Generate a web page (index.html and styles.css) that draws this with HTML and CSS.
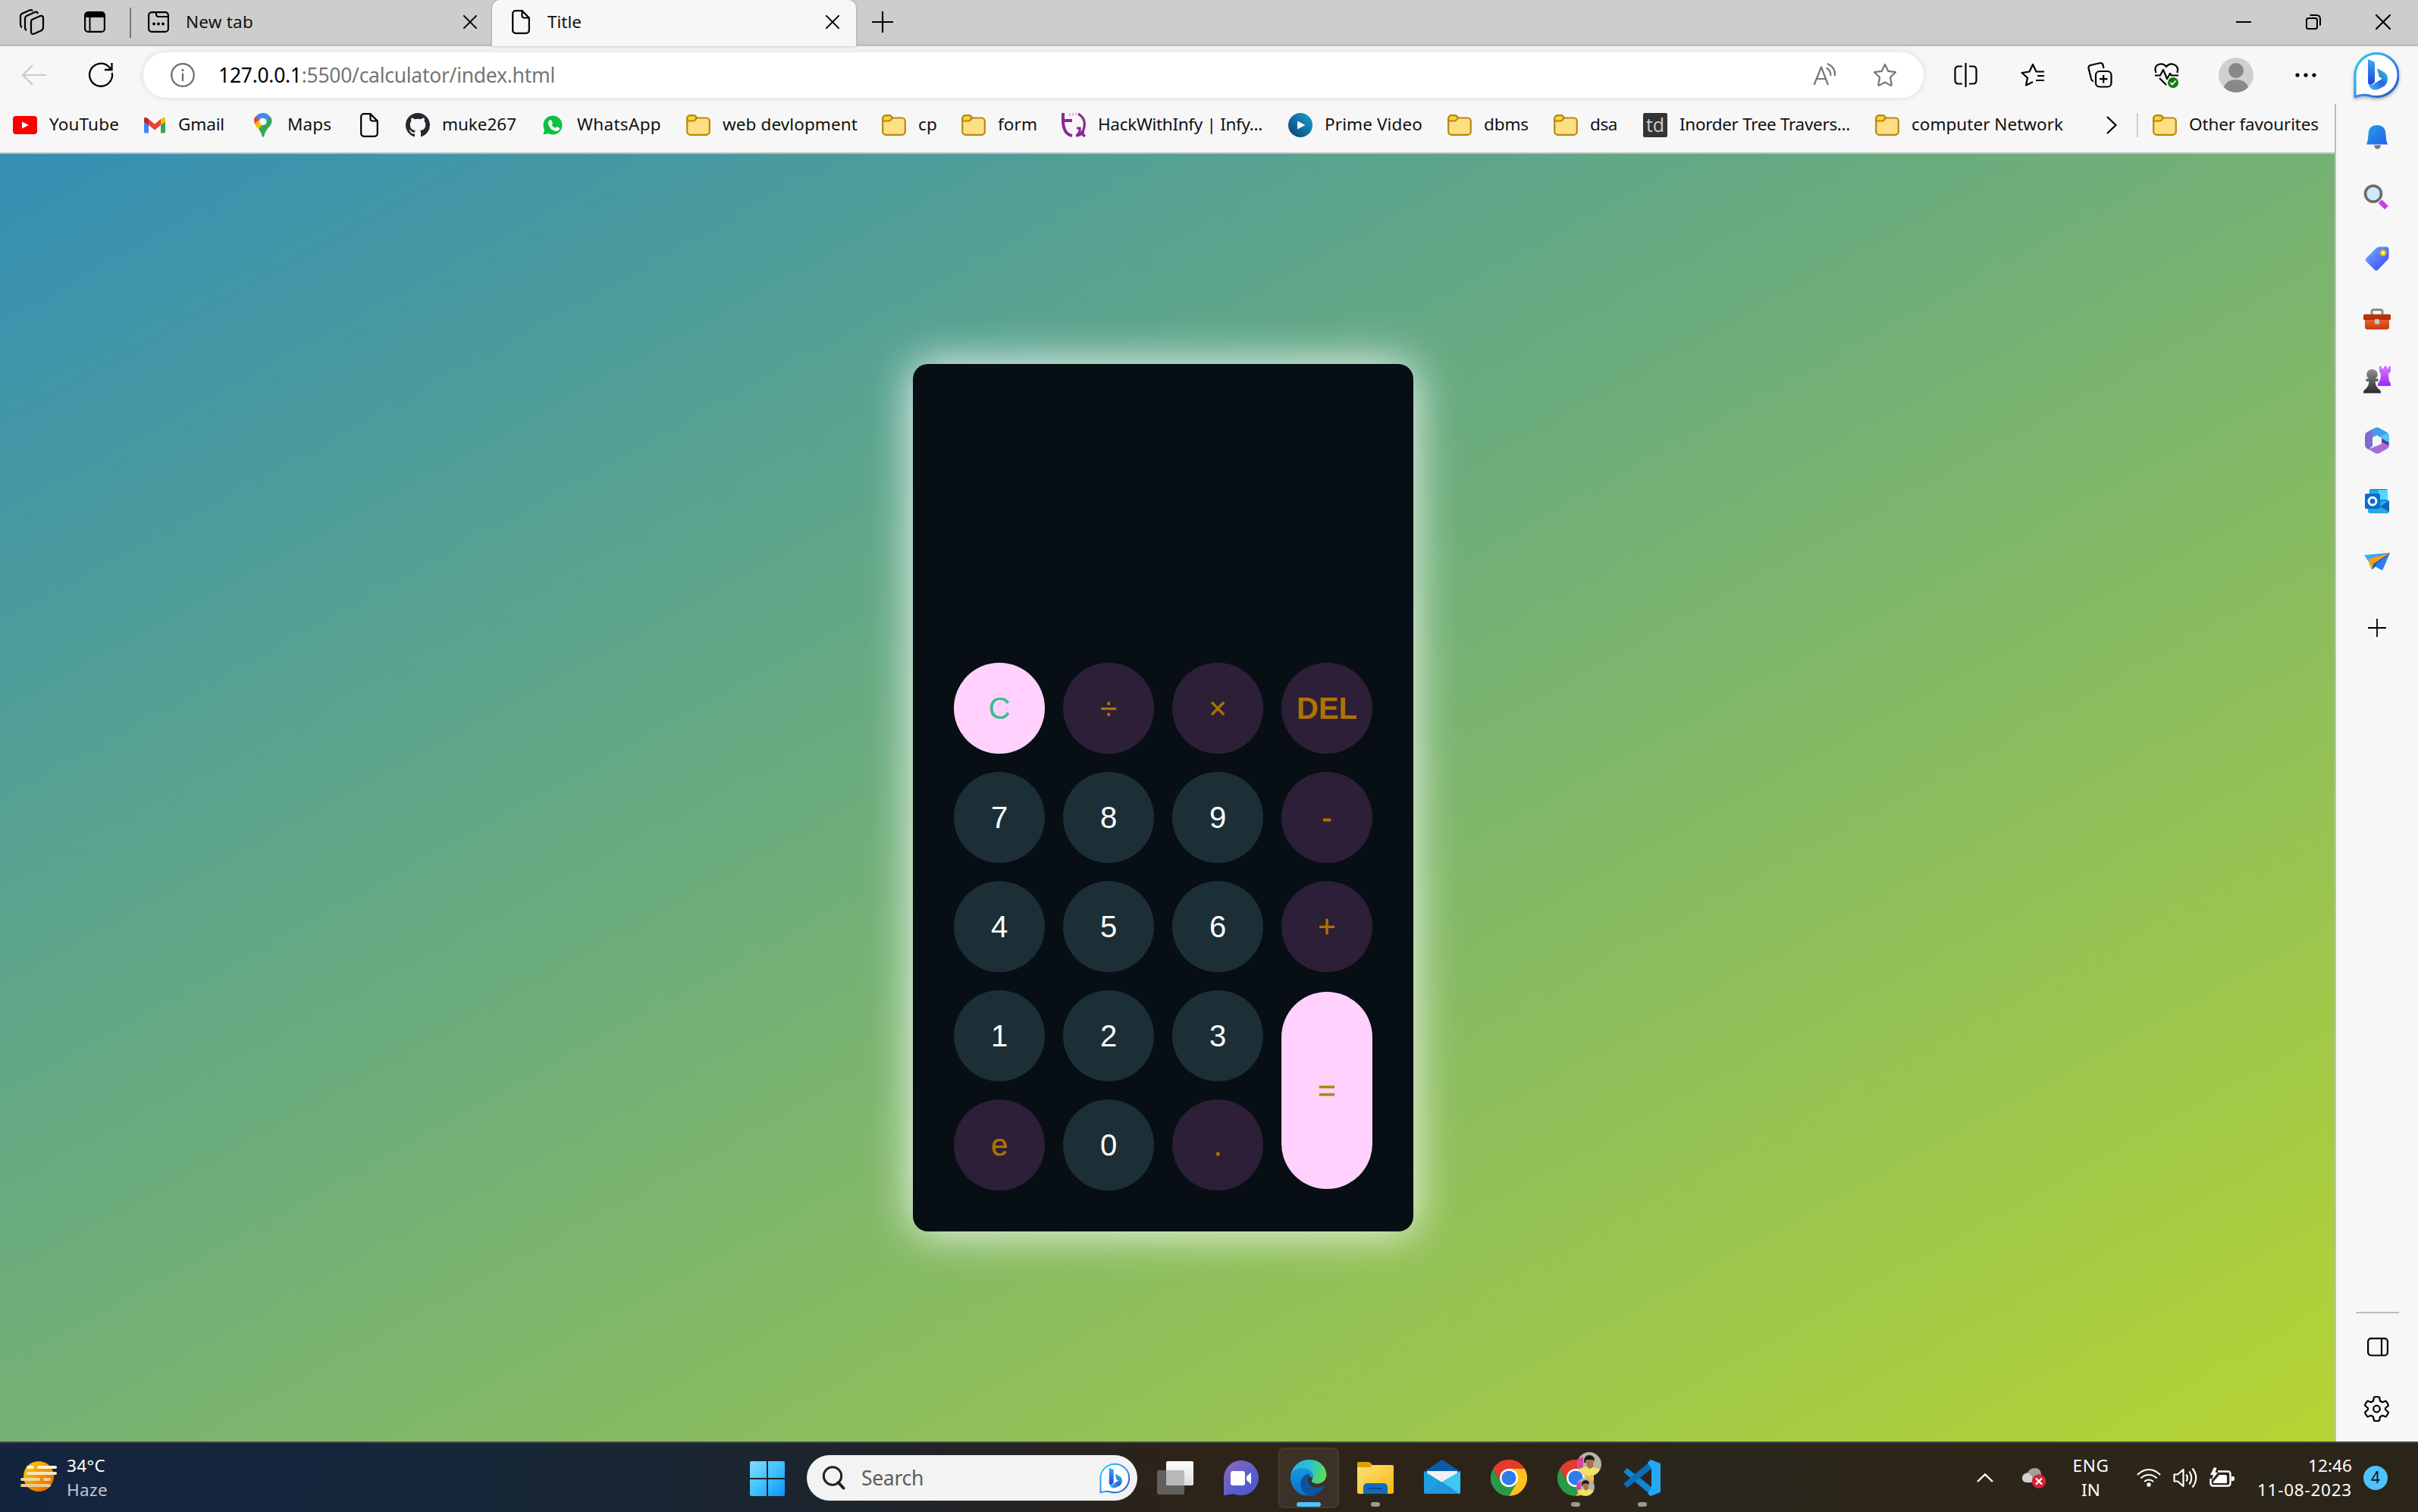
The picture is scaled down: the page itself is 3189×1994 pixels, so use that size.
FILE: index.html
```html
<!DOCTYPE html>
<html lang="en">
<head>
<meta charset="utf-8">
<title>Title</title>
<link rel="stylesheet" href="styles.css">
</head>
<body>
<svg class="defs" width="0" height="0">
  <defs>
    <linearGradient id="gBing" x1="0" y1="0" x2="1" y2="1"><stop offset="0" stop-color="#17d3ee"/><stop offset=".5" stop-color="#3a8ff0"/><stop offset="1" stop-color="#1d4fc4"/></linearGradient>
    <linearGradient id="gBingB" x1="0" y1="0" x2="0" y2="1"><stop offset="0" stop-color="#3aa9f5"/><stop offset="1" stop-color="#1c45dc"/></linearGradient>
    <linearGradient id="gBingC" x1="0" y1="1" x2="1" y2="0"><stop offset="0" stop-color="#37c3f8"/><stop offset=".5" stop-color="#2b62e0"/><stop offset="1" stop-color="#27e0c8"/></linearGradient>
    <linearGradient id="gBell" x1="0" y1="0" x2="1" y2="1"><stop offset="0" stop-color="#1fa3e0"/><stop offset="1" stop-color="#2a5df0"/></linearGradient>
    <linearGradient id="gTag" x1="0" y1="0" x2="1" y2="1"><stop offset="0" stop-color="#70b4ff"/><stop offset="1" stop-color="#3a3ff5"/></linearGradient>
    <linearGradient id="gBox" x1="0" y1="0" x2="0" y2="1"><stop offset="0" stop-color="#ef6a35"/><stop offset="1" stop-color="#c23a0c"/></linearGradient>
    <linearGradient id="gPawn" x1="0" y1="0" x2="0" y2="1"><stop offset="0" stop-color="#8e8e8e"/><stop offset="1" stop-color="#2a2a2a"/></linearGradient>
    <linearGradient id="gRook" x1="0" y1="0" x2="0" y2="1"><stop offset="0" stop-color="#d57bff"/><stop offset="1" stop-color="#a425f5"/></linearGradient>
    <linearGradient id="gPlane" x1="0" y1="0" x2="1" y2="1"><stop offset="0" stop-color="#3cc0f0"/><stop offset="1" stop-color="#2463e8"/></linearGradient>
    <linearGradient id="gWin" x1="0" y1="0" x2="1" y2="1"><stop offset="0" stop-color="#82dcff"/><stop offset=".5" stop-color="#41c1ff"/><stop offset="1" stop-color="#0a93ff"/></linearGradient>
    <linearGradient id="gSun" x1="0" y1="0" x2="1" y2="1"><stop offset="0" stop-color="#ffd400"/><stop offset="1" stop-color="#e55a00"/></linearGradient>
    <linearGradient id="gChat" x1="0" y1="0" x2="1" y2="1"><stop offset="0" stop-color="#8f6ab8"/><stop offset=".55" stop-color="#5b5fcb"/><stop offset="1" stop-color="#4c55c8"/></linearGradient>
    <linearGradient id="gEdgeT" x1="0" y1=".4" x2="1" y2=".6"><stop offset="0" stop-color="#2ba8e8"/><stop offset=".5" stop-color="#2bc3d2"/><stop offset="1" stop-color="#62e04a"/></linearGradient>
    <linearGradient id="gEdgeL" x1="0" y1="0" x2="0" y2="1"><stop offset="0" stop-color="#1796dc"/><stop offset="1" stop-color="#0a72cf"/></linearGradient>
    <linearGradient id="gFolder" x1="0" y1="0" x2="1" y2="1"><stop offset="0" stop-color="#ffe07a"/><stop offset="1" stop-color="#f8b80e"/></linearGradient>
    <linearGradient id="gPrime" x1="1" y1="0" x2="0" y2="1"><stop offset="0" stop-color="#1b9fd0"/><stop offset="1" stop-color="#0b3f78"/></linearGradient>
    <linearGradient id="gSq" x1="0" y1="0" x2="0" y2="1"><stop offset="0" stop-color="#ffffff"/><stop offset="1" stop-color="#dcdcdc"/></linearGradient>
    <symbol id="folder" viewBox="0 0 32 28"><path d="M1.2 23V5.5A4.3 4.3 0 0 1 5.5 1.200H9.500Q11.500 1.200 12.500 2.700L14 4.500H26.500A4.300 4.300 0 0 1 30.800 8.800V22.500A4.300 4.300 0 0 1 26.500 26.800H5.500A4.300 4.300 0 0 1 1.200 22.500Z" fill="#ffdf83" stroke="#b58a0a" stroke-width="2.200"/><path d="M1.200 8.500V5.500A4.300 4.300 0 0 1 5.500 1.200H9.500Q11.500 1.200 12.500 2.700L14 4.500 11.500 7.500Q10.500 8.500 9 8.500Z" fill="#fecf3f" stroke="#b58a0a" stroke-width="2.200"/></symbol>
    <symbol id="page" viewBox="0 0 24 32"><path d="M5 1.200H13.500L22.800 10.500V27A3.800 3.800 0 0 1 19 30.800H5A3.800 3.800 0 0 1 1.200 27V5A3.800 3.800 0 0 1 5 1.200ZM13.500 1.500V8A2.500 2.500 0 0 0 16 10.500H22.500" fill="none" stroke="#000" stroke-width="2.200"/></symbol>
    <symbol id="bing" viewBox="0 0 60 62"><path d="M2 59.500V31A28.500 28.500 0 1 1 30.500 59.500Q25 59.500 20 57.800 13 56 2 59.500Z" fill="#fff" stroke="url(#gBing)" stroke-width="3"/><path d="M19 10 27 13.500Q28 14 28 15.500V40Q24 45 20 43.500 19 42 19 40Z" fill="url(#gBingB)"/><path d="M31 22 40 27Q45 30 45 36 45 43 39 46.500L32 50Q24 52 21 46 20 43 20 42 25 46 28 42L38 35.500 34 33.500Z" fill="url(#gBingC)"/></symbol>
    <symbol id="chrome" viewBox="0 0 48 48"><path d="M24 24 3.200 12A24 24 0 0 1 44.800 12Z" fill="#e33b2e"/><path d="M24 24V12H44.800A24 24 0 0 1 24 48L34.400 30Z" fill="#fcc31e"/><path d="M24 24 34.400 30 24 48A24 24 0 0 1 3.200 12L13.600 30Z" fill="#2a9a47"/><path d="M24 12H44.800A24 24 0 0 0 3.200 12L13.600 30A12 12 0 0 1 24 12Z" fill="#e33b2e"/><circle cx="24" cy="24" r="12" fill="#fff"/><circle cx="24" cy="24" r="9.600" fill="#2f7cee"/></symbol>
    <symbol id="cross" viewBox="0 0 20 20"><path d="M1 1 19 19M19 1 1 19" stroke="#000" stroke-width="2.200" stroke-linecap="round" fill="none"/></symbol>
    <symbol id="star" viewBox="0 0 32 32"><path d="M16 2 20.300 10.800 30 12.200 23 19 24.700 28.700Q24.700 30 23.500 29.600L16 25.500 8.500 29.600Q7.300 30 7.300 28.700L9 19 2 12.200 11.700 10.800Z" fill="none" stroke="#767676" stroke-width="2.200" stroke-linejoin="round"/></symbol>
    <symbol id="face" viewBox="0 0 32 32"><circle cx="16" cy="16" r="16" fill="#b9b3a4"/><path d="M1.500 9A16 16 0 0 0 1.500 22L8 20V6Z" fill="#d6489c"/><path d="M2 23A16 16 0 0 0 30 23Q26 20 21 20L12 19Q6 21 2 23Z" fill="#efe36b"/><path d="M11 10Q16 5 22 10L21 19Q17 25 13 19Z" fill="#a9714f"/><path d="M9 13Q9 4 16 4T23 12L21 10H12L10.500 15Z" fill="#1c1816"/></symbol>
  </defs>
</svg>

<header class="tabs">
  <svg class="ic" width="34" height="34" viewBox="0 0 34 34" fill="none" stroke="#000" stroke-width="2.200" stroke-linejoin="round"><path d="M17 14 28 9Q32 8 32 12V24Q32 27 29 28.500L20 32.500Q16 34 16 30V17Q16 15 17 14ZM10 28Q8 27 8 24V12Q8 10 10 9L21 4Q24 3 25 6M4 24Q2 23 2 20V9Q2 7 4 6L14 1.500Q17 .500 18 2.500"/></svg>
  <svg class="ic" width="28" height="28" viewBox="0 0 28 28"><rect x="1.100" y="1.100" width="25.800" height="25.800" rx="4" fill="none" stroke="#000" stroke-width="2.200"/><path d="M1 8V5Q1 1 5 1H23Q27 1 27 5V8Z"/><path d="M7.500 8V27" stroke="#000" stroke-width="2"/></svg>
  <i class="tab-sep"></i>
  <div class="tab">
    <svg class="ic" width="28" height="28" viewBox="0 0 28 28"><rect x="1.100" y="1.100" width="25.800" height="25.800" rx="4" fill="none" stroke="#000" stroke-width="2.200"/><path d="M11 1V4Q11 7 14 7H27" fill="none" stroke="#000" stroke-width="2"/><circle cx="8" cy="16.500" r="1.900"/><circle cx="14" cy="16.500" r="1.900"/><circle cx="20" cy="16.500" r="1.900"/></svg>
    <span class="t" data-w="88">New tab</span>
    <svg class="ic" width="18" height="18"><use href="#cross"/></svg>
  </div>
  <div class="tab active">
    <svg class="ic" width="24" height="32"><use href="#page"/></svg>
    <span class="t" data-w="44">Title</span>
    <svg class="ic" width="18" height="18"><use href="#cross"/></svg>
  </div>
  <svg class="ic plus" width="28" height="28" viewBox="0 0 28 28"><path d="M14 0V28M0 14H28" stroke="#000" stroke-width="2.200"/></svg>
  <div class="win">
    <svg class="ic" width="20" height="20" viewBox="0 0 20 20"><path d="M0 10H20" stroke="#000" stroke-width="2"/></svg>
    <svg class="ic" width="20" height="20" viewBox="0 0 20 20" fill="none" stroke="#000" stroke-width="2"><rect x="1" y="5" width="14" height="14" rx="2.500"/><path d="M5.500 1H14Q19 1 19 6V14.500"/></svg>
    <svg class="ic" width="20" height="20"><use href="#cross"/></svg>
  </div>
</header>

<nav class="toolbar">
  <svg class="ic" width="32" height="28" viewBox="0 0 32 28"><path d="M14 1 1 14 14 27M1 14H32" fill="none" stroke="#c9c9c9" stroke-width="2.200"/></svg>
  <svg class="ic" width="32" height="32" viewBox="0 0 32 32"><path d="M30.800 13A15 15 0 1 1 26 4.500L30 9M30.500 0V9H21" fill="none" stroke="#000" stroke-width="2.300"/></svg>
  <div class="url">
    <svg class="ic" width="32" height="32" viewBox="0 0 32 32"><circle cx="16" cy="16" r="14.800" fill="none" stroke="#6a6a6a" stroke-width="2.200"/><path d="M16 13.500V24" stroke="#6a6a6a" stroke-width="2.200"/><circle cx="16" cy="9.500" r="1.600" fill="#6a6a6a"/></svg>
    <span class="t address" data-w="443"><b>127.0.0.1</b>:5500/calculator/index.html</span>
    <svg class="ic" width="32" height="32" viewBox="0 0 32 32" fill="none" stroke="#767676" stroke-width="2.200"><path d="M1.500 29 11 5.500 20 29M5 21H17M19 1Q30 6 29 17M17.500 6.500Q24 10 23.500 17" stroke-linejoin="round"/></svg>
    <svg class="ic" width="32" height="32"><use href="#star"/></svg>
  </div>
  <svg class="ic" width="32" height="32" viewBox="0 0 32 32" fill="none" stroke="#000" stroke-width="2.200"><path d="M15.500 0V32M11 4.500H6Q1.500 4.500 1.500 9V23Q1.500 27.500 6 27.500H11M20 4.500H25Q29.500 4.500 29.500 9V23Q29.500 27.500 25 27.500H20"/></svg>
  <svg class="ic" width="32" height="32" viewBox="0 0 32 32" fill="none" stroke="#000" stroke-width="2.200" stroke-linejoin="round"><path d="M31 11.500H20.500L16 2 11.500 11.500 1.500 13 9 19.500 7 29.500 16 25M22 17H31M20 23H31"/></svg>
  <svg class="ic" width="34" height="34" viewBox="0 0 34 34" fill="none" stroke="#000" stroke-width="2.200"><rect x="11" y="12" width="20.500" height="20.500" rx="5"/><path d="M21.200 17V27.500M16 22.200H26.500M8 25Q6 25 5 22L1.500 8Q1 5 4 4L17 1Q19.500 .800 20.500 3.500L21.500 8"/></svg>
  <svg class="ic" width="34" height="34" viewBox="0 0 34 34" fill="none" stroke="#000" stroke-width="2.200" stroke-linejoin="round"><path d="M2.500 14Q-1 4 8 2.500 13 2 16 6 20 1 26 3 33 6 30.500 14M1 17.500H8L12 10 17 22 21 15 23 17.500H32M7 21 16 30"/><circle cx="25" cy="27" r="7" fill="#0f7b0f" stroke="none"/><path d="M21.500 27 24 29.500 28.500 24.500" stroke="#fff" stroke-width="1.800"/></svg>
  <svg class="ic" width="46" height="46" viewBox="0 0 46 46"><circle cx="23" cy="23" r="23" fill="#d2d0ce"/><circle cx="23" cy="17" r="10" fill="#8a8886"/><path d="M7 39Q10 29 23 29T39 39Q32 46 23 46T7 39Z" fill="#8a8886"/></svg>
  <svg class="ic" width="28" height="6" viewBox="0 0 28 6"><circle cx="3" cy="3" r="2.600"/><circle cx="14" cy="3" r="2.600"/><circle cx="25" cy="3" r="2.600"/></svg>
  <svg class="ic bing-top" width="60" height="62"><use href="#bing"/></svg>
</nav>

<nav class="bookmarks">
  <a><svg width="32" height="24" viewBox="0 0 32 24"><rect width="32" height="24" rx="4" fill="#f00"/><path d="M12 7.500 21 12 12 16.500Z" fill="#fff"/></svg><span class="t" data-w="91">YouTube</span></a>
  <a><svg width="32" height="24" viewBox="0 0 32 24"><path d="M3 4V21Q3 22.500 4.500 22.500H9V10Z" fill="#4285f4"/><path d="M31 4V21Q31 22.500 29.500 22.500H25V10Z" fill="#34a853"/><path d="M9 4 17 10.500 25 4V12L17 18.500 9 12Z" fill="#ea4335"/><path d="M3 5Q3 1 6 2L9 4V12L3 7.500Z" fill="#c5221f"/><path d="M31 5Q31 1 28 2L25 4V12L31 7.500Z" fill="#fbbc04"/></svg><span class="t" data-w="60">Gmail</span></a>
  <a><svg width="32" height="32" viewBox="0 0 32 32"><path d="M6 5A12 12 0 0 1 20 .800L9 14Z" fill="#4285f4"/><path d="M6 4.500 11 9 5.500 15Q2 9 6 4.500Z" fill="#ea4335"/><path d="M5 14 20 1Q28 5 27.500 12L10 21Q6 18 5 14Z" fill="#fbbc04"/><path d="M10 21 26 5Q30 13 23 19.500 18 25 17 31.500H15Q14 26 10 21Z" fill="#34a853"/><path d="M13 1Q22-1 25.500 6L18 13Z" fill="#4285f4"/><circle cx="16" cy="11.500" r="4.600" fill="#fff"/></svg><span class="t" data-w="57">Maps</span></a>
  <a><svg class="pg" width="24" height="32"><use href="#page"/></svg></a>
  <a><svg width="32" height="32" viewBox="0 0 16 16"><path fill="#24292f" d="M8 0C3.580 0 0 3.580 0 8c0 3.540 2.290 6.530 5.470 7.590.4.070.55-.17.55-.38 0-.19-.01-.82-.01-1.490-2.010.37-2.530-.49-2.690-.94-.09-.23-.48-.94-.82-1.130-.28-.15-.68-.52-.01-.53.63-.01 1.080.58 1.230.82.72 1.210 1.870.87 2.330.66.07-.52.28-.87.51-1.070-1.780-.2-3.640-.89-3.640-3.950 0-.87.31-1.590.82-2.150-.08-.2-.36-1.020.08-2.120 0 0 .67-.21 2.200.82.64-.18 1.320-.27 2-.27s1.360.09 2 .27c1.530-1.040 2.200-.82 2.200-.82.44 1.100.16 1.920.08 2.120.51.56.82 1.270.82 2.150 0 3.070-1.870 3.750-3.650 3.950.29.25.54.73.54 1.480 0 1.070-.01 1.930-.01 2.200 0 .21.15.46.55.38A8.010 8.010 0 0 0 16 8c0-4.420-3.580-8-8-8z"/></svg><span class="t" data-w="97">muke267</span></a>
  <a><svg width="32" height="32" viewBox="0 0 32 32"><path d="M3.500 28.500 5 22A12.500 12.500 0 1 1 10 27Z" fill="#0dc143"/><path d="M11.500 9.500 14 9.200 16 13.500 14.500 15.500Q16 18.500 19.500 20L21.500 18 25 20Q25 23.500 21 24 11 22.500 10 13 10 11 11.500 9.500Z" fill="#fff"/></svg><span class="t" data-w="110">WhatsApp</span></a>
  <a><svg width="32" height="28"><use href="#folder"/></svg><span class="t" data-w="177">web devlopment</span></a>
  <a><svg width="32" height="28"><use href="#folder"/></svg><span class="t" data-w="24">cp</span></a>
  <a><svg width="32" height="28"><use href="#folder"/></svg><span class="t" data-w="51">form</span></a>
  <a><svg width="32" height="32" viewBox="0 0 32 32" fill="none" stroke="#8a2a95"><path d="M2 0V12Q3 28 14 30M2 10H14" stroke-width="4"/><path d="M22 1Q32 7 30 18 28 30 19 30M20 20H24V26H30M20 30 24 25 31 31" stroke-width="3.200"/><path d="M11 0V4M15 0V4M19 0V3" stroke="#d5a8da" stroke-width="1.500"/></svg><span class="t" data-w="216">HackWithInfy | Infy...</span></a>
  <a><svg width="32" height="32" viewBox="0 0 32 32"><circle cx="16" cy="16" r="16" fill="url(#gPrime)"/><path d="M12 10.500 22.500 16 12 21.500Z" fill="#fff"/></svg><span class="t" data-w="128">Prime Video</span></a>
  <a><svg width="32" height="28"><use href="#folder"/></svg><span class="t" data-w="58">dbms</span></a>
  <a><svg width="32" height="28"><use href="#folder"/></svg><span class="t" data-w="35">dsa</span></a>
  <a><i class="td">td</i><span class="t" data-w="224">Inorder Tree Travers...</span></a>
  <a><svg width="32" height="28"><use href="#folder"/></svg><span class="t" data-w="199">computer Network</span></a>
  <svg class="ic" width="14" height="24" viewBox="0 0 14 24"><path d="M1 1 12.500 12 1 23" fill="none" stroke="#000" stroke-width="2.200"/></svg>
  <i class="bm-sep"></i>
  <a><svg width="32" height="28"><use href="#folder"/></svg><span class="t" data-w="170">Other favourites</span></a>
</nav>

<main class="page">
  <section class="calculator">
    <div class="display"></div>
    <div class="keys">
      <button class="key clear">C</button><button class="key op">÷</button><button class="key op">×</button><button class="key op del">DEL</button>
      <button class="key">7</button><button class="key">8</button><button class="key">9</button><button class="key op">-</button>
      <button class="key">4</button><button class="key">5</button><button class="key">6</button><button class="key op">+</button>
      <button class="key">1</button><button class="key">2</button><button class="key">3</button><button class="key equals">=</button>
      <button class="key op">e</button><button class="key">0</button><button class="key op">.</button>
    </div>
  </section>
</main>

<aside class="side">
  <div><svg width="32" height="38" viewBox="0 0 32 38"><path d="M12 28.500H21Q20 33.500 16.500 33.500T12 28.500Z" fill="#777"/><path d="M2 27Q4 24 4.500 14 5 2 16 2T27.500 14Q28 24 30 27 30 27.500 29 27.500H3Q2 27.500 2 27Z" fill="url(#gBell)"/></svg></div>
  <div><svg width="36" height="38" viewBox="0 0 36 38"><circle cx="13" cy="12.500" r="10.500" fill="#cfeafc" stroke="#6b6b6b" stroke-width="3.600"/><path d="M22 22.500 30.500 31" stroke="#c83bf0" stroke-width="6.500"/></svg></div>
  <div><svg width="32" height="33" viewBox="0 0 32 33"><path d="M2 15 15 2Q17 .500 19 .500H28Q31.500.500 31.500 4V13.500Q31.500 16 30 17.500L17 31Q15 33 13 31L1.500 19.500Q0 17 2 15Z" fill="url(#gTag)"/><circle cx="24" cy="8.500" r="3" fill="#fff" stroke="#f5c400" stroke-width="2.500"/></svg></div>
  <div><svg width="36" height="28" viewBox="0 0 36 28"><path d="M11 8V4Q11 1.500 13.500 1.500H22.500Q25 1.500 25 4V8" fill="none" stroke="#8b8b8b" stroke-width="3"/><path d="M2 13H34V24Q34 27.500 30.500 27.500H5.500Q2 27.500 2 24Z" fill="url(#gBox)"/><rect y="7.500" width="36" height="7.500" rx="1.500" fill="#b83208"/><rect x="15" y="14" width="6" height="6.500" rx="1" fill="#c9c9c9"/></svg></div>
  <div><svg width="36" height="38" viewBox="0 0 36 38"><path d="M21 1H24V4H27V1H31V4H33V1H36V8L33 11Q33 20 36 24V27H19V24Q23 20 23 11L21 8Z" fill="url(#gRook)"/><path d="M11.500 5A7 7 0 0 1 16 17.500H19.500V21H15.500Q16 27 20 31 23 32 23 36.500H0Q0 32 3 31 7 27 7.500 21H3.500V17.500H7A7 7 0 0 1 11.500 5Z" fill="url(#gPawn)"/></svg></div>
  <div><svg width="32" height="36" viewBox="0 0 32 36"><path d="M10 12V25L5 30 2 28Q0 26 0 24V12Q0 8 4 6L12 2 16 6Z" fill="#7d6bd2"/><path d="M10 3 14 1Q16 0 18 1L29 7Q32 9 32 12V21L22 15 16 11.500 10 14Z" fill="#3f9fee"/><path d="M20 13 30 8Q32 10 32 12V21L22 15Z" fill="#4cc8fa"/><path d="M5 29.500 22 22V17L32 21V24Q32 27 29 29L19 34.500Q16 36 13 34.500Z" fill="#a36fd6"/><path d="M22 15 32 21 30 24 22 20Z" fill="#5a3c9c"/><path d="M10 14 16 11 22 15V22L16 25 10 22Z" fill="#f7f7f7"/></svg></div>
  <div><svg width="32" height="34" viewBox="0 0 32 34"><rect x="6" y="1" width="24" height="28" rx="2" fill="#1673c8"/><path d="M18 2H30V15H18Z" fill="#50d9ff"/><path d="M7 2H18V15H7Z" fill="#28a8ea"/><path d="M4 18 32 16V30Q32 33 29 33H7Q4 33 4 30Z" fill="#28a8ea"/><path d="M20 24 32 16V31Z" fill="#1066b5"/><rect y="7" width="20" height="20" rx="2" fill="#0a6cc8"/><circle cx="10" cy="17" r="5" fill="none" stroke="#fff" stroke-width="3"/></svg></div>
  <div><svg width="34" height="25" viewBox="0 0 34 25"><path d="M0 4 34 1 24 24 14 19 10 23 6 13Z" fill="url(#gPlane)"/><path d="M6 9 34 1 12 16 10 23 6 13Z" fill="#f0a112"/><path d="M34 1 12 16 11 23 15 19Z" fill="#1f56c0"/><path d="M34 1 15 17 24 24Z" fill="#2b7fee"/></svg></div>
  <div><svg width="24" height="24" viewBox="0 0 24 24"><path d="M12 0V24M0 12H24" stroke="#000" stroke-width="1.800"/></svg></div>
  <div class="side-bottom"><svg width="28" height="25" viewBox="0 0 28 25" fill="none" stroke="#000" stroke-width="2.200"><rect x="1.100" y="1.100" width="25.800" height="22.400" rx="4"/><path d="M19 1V24"/></svg></div>
  <div><svg width="33" height="34" viewBox="0 0 33 34" fill="none" stroke="#000" stroke-width="2.200" stroke-linejoin="round"><circle cx="16.500" cy="17" r="4.300"/><path d="M13 1.500Q16.500.500 20 1.500L21 6.500 24 8.300 28.500 6.500Q31 9 32 12.500L28 16V18L32 21.500Q31 25 28.500 27.500L24 25.700 21 27.500 20 32.500Q16.500 33.500 13 32.500L12 27.500 9 25.700 4.500 27.500Q2 25 1 21.500L5 18V16L1 12.500Q2 9 4.500 6.500L9 8.300 12 6.500Z"/></svg></div>
</aside>

<footer class="taskbar">
  <div class="weather">
    <svg width="48" height="42" viewBox="0 0 48 42"><circle cx="24" cy="21" r="20" fill="url(#gSun)"/><g stroke-width="4" stroke-linecap="round"><path d="M10 9H16M24 9H46" stroke="#fff6dc"/><path d="M10 17H46" stroke="#f7e6bd"/><path d="M2 25H24M32 25H38" stroke="#eed59b"/><path d="M2 33H38" stroke="#e8cb90"/></g></svg>
    <div class="stack"><span class="t" data-w="50">34°C</span><span class="t dim" data-w="53">Haze</span></div>
  </div>
  <svg class="win-logo" width="46" height="46" viewBox="0 0 46 46" fill="url(#gWin)"><path d="M2 0H22V22H0V2Q0 0 2 0ZM24 0H44Q46 0 46 2V22H24ZM0 24H22V46H2Q0 46 0 44ZM24 24H46V44Q46 46 44 46H24Z"/></svg>
  <div class="search">
    <svg width="30" height="32" viewBox="0 0 30 32" fill="none" stroke="#222"><circle cx="13" cy="13.500" r="11.700" stroke-width="3"/><path d="M20.500 22 27.500 29.500" stroke-width="4" stroke-linecap="round"/></svg>
    <span class="t" data-w="81">Search</span>
    <svg width="40" height="41"><use href="#bing"/></svg>
  </div>
  <div class="apps">
    <div class="app"><svg width="48" height="46" viewBox="0 0 48 46"><rect x="12" y="1" width="36" height="32" rx="2" fill="url(#gSq)"/><rect x="0" y="13" width="36" height="32" rx="2" fill="#6b6b6b" fill-opacity=".85"/><rect x="12" y="13" width="24" height="20" fill="#b9b9b9"/></svg></div>
    <div class="app"><svg width="48" height="48" viewBox="2 0 48 48"><path d="M2 47V25A23 23 0 1 1 25 47Q20 47 16 45.500 9 45 2 47Z" fill="url(#gChat)"/><rect x="11" y="15" width="19" height="19" rx="3" fill="#fff"/><path d="M32 22 38 17V32L32 27Z" fill="#fff"/></svg></div>
    <div class="app on"><svg width="48" height="48" viewBox="0 0 48 48"><path d="M0 24A24 24 0 0 1 24 0Q40 0 46 13 50 23 43 29 36 34 29 30 27 28 29 25 31 19 24 16 12 11 4 18Z" fill="url(#gEdgeT)"/><path d="M0 24Q2 12 14 11 27 11 30 20L28 24Q22 18 18 26 14 40 30 47 12 50 4 37 0 31 0 24Z" fill="url(#gEdgeL)"/><path d="M24 18Q14 21 13 31 13 44 27 48 38 47 45 35 46 34 44 34 36 39 28 35 20 30 25 21Z" fill="#0d529e"/></svg><i></i></div>
    <div class="app run"><svg width="48" height="42" viewBox="0 4 48 42"><path d="M0 6Q0 4 2 4H15Q17 4 20 8V18H0Z" fill="#dca00c"/><path d="M0 11H17L20 8H46Q48 8 48 10V44Q48 46 46 46H2Q0 46 0 44Z" fill="url(#gFolder)"/><path d="M8 46V38Q8 32 13 32H35Q40 32 40 38V46Z" fill="#0f6cbd"/><path d="M15 39H33" stroke="#0a4a86" stroke-width="2"/></svg><i></i></div>
    <div class="app"><svg width="48" height="48" viewBox="0 0 48 48"><path d="M0 16 22 1Q24 0 26 1L48 16 40 24H8Z" fill="#0a5ca8"/><path d="M4 15H44V30L24 40 4 30Z" fill="#f1f1f1"/><path d="M0 15 48 45H2Q0 45 0 43Z" fill="#1fa0e0"/><path d="M48 15V43Q48 45 46 45L24 29Z" fill="#3bc8f5"/><path d="M2 45 24 29 46 45Z" fill="#2492dc"/></svg></div>
    <div class="app"><svg width="48" height="48"><use href="#chrome"/></svg></div>
    <div class="app run"><svg width="48" height="48"><use href="#chrome"/></svg><svg class="badge big" width="32" height="32"><use href="#face"/></svg><svg class="badge small" width="24" height="24"><use href="#face"/></svg><i></i></div>
    <div class="app run"><svg width="48" height="48" viewBox="0 0 48 48"><path d="M0 15 4 11 36 36V47L1 18Q-1 17 0 15Z" fill="#0b87d6"/><path d="M0 33 4 37 36 12V1L1 30Q-1 31 0 33Z" fill="#0a6fb8"/><path d="M35 0 48 5V43L35 48 31 45 36 36V12L31 4Z" fill="#25a7f2"/></svg><i></i></div>
  </div>
  <div class="tray">
    <svg width="22" height="12" viewBox="0 0 22 12"><path d="M1 11 11 1.500 21 11" fill="none" stroke="#fff" stroke-width="2.400"/></svg>
    <svg width="34" height="28" viewBox="0 0 34 28"><path d="M8 7Q12 0 19 1T26 10L14 20H6Q0 18 1 13T8 7Z" fill="#a09f9c"/><path d="M1 14Q3 7 9 8 15 9 15 20H6Q1 19 1 14Z" fill="#d3d2d0"/><circle cx="23" cy="18.500" r="9.300" fill="#d92432"/><path d="M19 14.500 27 22.500M27 14.500 19 22.500" stroke="#fff" stroke-width="2.400"/></svg>
    <div class="stack lang"><span class="t" data-w="47">ENG</span><span class="t" data-w="24">IN</span></div>
    <svg width="32" height="26" viewBox="0 0 32 26" fill="none" stroke="#fff" stroke-width="2.200"><path d="M1 9Q8 2 16 2T31 9M5.500 13.500Q10 9 16 9T26.500 13.500M10 18Q12.500 15.500 16 15.500T22 18"/><circle cx="16" cy="22" r="2.700" fill="#fff" stroke="none"/></svg>
    <svg width="32" height="28" viewBox="0 0 32 28" fill="none" stroke="#fff" stroke-width="2.200" stroke-linejoin="round"><path d="M1.500 9.500H6L13.500 3V25L6 18.500H1.500ZM17.500 9.500Q20 14 17.500 18.500M21.500 5.500Q27 14 21.500 22.500M25.500 1.500Q35 14 25.500 26.500"/></svg>
    <svg width="34" height="28" viewBox="0 0 34 28"><path d="M11 5.500H24Q27.500 5.500 27.500 9V21Q27.500 24.500 24 24.500H5Q1.500 24.500 1.500 21V15" fill="none" stroke="#fff" stroke-width="2.400"/><path d="M6 0 1 10H5L3 17 11 7H7.500L9.500 1Z M13 10H20Q23 10 23 12V21H5V19ZM29 12H31Q33 12 33 14V16Q33 18 31 18H29Z" fill="#fff"/></svg>
    <div class="stack clock"><span class="t" data-w="57">12:46</span><span class="t" data-w="124">11-08-2023</span></div>
    <span class="count">4</span>
  </div>
</footer>
<script src="labels.js"></script>
</body>
</html>
```

FILE: styles.css
```css
* { box-sizing: border-box; }
body {
  margin: 0;
  width: 3189px;
  height: 1994px;
  overflow: hidden;
  display: grid;
  grid-template-columns: 3079px 110px;
  grid-template-rows: 61px 76px 66px 1698px 93px;
  font: 22.5px/1 "Noto Sans", "Open Sans", sans-serif;
  color: #111;
  background: #f7f7f7;
}
svg { display: block; flex: none; overflow: visible; }
.defs { position: absolute; }
.t { display: block; white-space: nowrap; line-height: 32px; justify-self: start; }

.tabs {
  grid-column: 1 / 3;
  display: grid;
  grid-template-columns: 86px 60px 24px 454px 480px 76px 1fr;
  align-items: center;
  padding-left: 25px;
  background: linear-gradient(#cdcdcd 56px, #b9b9b9 61px);
}
.tabs > .ic { margin-top: -3px; }
.tab-sep { width: 2px; height: 40px; margin-top: -1px; background: #777; }
.tab {
  display: grid;
  grid-template-columns: 50px 1fr auto;
  align-items: center;
  height: 61px;
  padding: 0 20px 3px 0;
}
.tab.active {
  grid-template-columns: 47px 1fr auto;
  padding: 0 22px 3px 26px;
  border-radius: 10px 10px 0 0;
  background: #f7f7f7;
  box-shadow: 0 0 3px #999;
}
.plus { justify-self: end; margin-right: 27px; }
.win { display: flex; justify-content: flex-end; gap: 72px; padding: 0 36px 3px 0; }

.toolbar {
  grid-column: 1 / 3;
  display: grid;
  grid-template-columns: 88px 72px 2388px 88px 88px 88px 85px 101px 77px 60px;
  align-items: center;
  height: 76px;
  padding-left: 29px;
}
.url {
  display: grid;
  grid-template-columns: 63px 1fr 79px 67px;
  align-items: center;
  width: 2348px;
  height: 60px;
  padding-left: 36px;
  border-radius: 30px;
  background: #fff;
  box-shadow: 0 0 10px rgba(0, 0, 0, .12);
}
.address { font-size: 26.5px; color: #757575; }
.address b { font-weight: 400; color: #000; }
.bing-top { filter: drop-shadow(0 2px 2px rgba(0, 0, 0, .3)); }

.bookmarks {
  display: grid;
  grid-template-columns: 170px 144px 142px 62px 178px 192px 258px 105px 132px 299px 210px 140px 118px 306px 305px 40px 21px 1fr;
  align-items: center;
  padding: 0 0 8px 17px;
  border-bottom: 2px solid #bdbdbd;
  white-space: nowrap;
}
.bookmarks a { display: flex; align-items: center; gap: 16px; }
.bookmarks .t { margin-top: -2px; }
.pg { margin-left: 2px; }
.td { width: 32px; height: 32px; border-radius: 2px; background: #353535; color: #ccc; font: 25px/30px "Open Sans", sans-serif; text-align: center; }
.bm-sep { width: 2px; height: 32px; background: #cecece; }

.page {
  display: grid;
  justify-content: center;
  align-content: start;
  padding: 277px 11px 0 0;
  background: linear-gradient(to bottom right, #348fb4, #b6d433);
}
.calculator {
  width: 660px;
  height: 1144px;
  padding: 54px;
  border-radius: 20px;
  background: #070f14;
  box-shadow: 0 0 60px rgba(255, 255, 255, .95);
}
.display { height: 340px; }
.keys { display: grid; grid-template-columns: repeat(4, 120px); grid-auto-rows: 120px; gap: 24px; }
.key {
  padding: 0;
  border: 0;
  border-radius: 60px;
  background: #1c2f37;
  color: #fff;
  font: 40px "Liberation Sans", Arial, sans-serif;
}
.op { background: #2d1f37; color: #b07200; -webkit-text-stroke: .4px; }
.del { font-weight: 700; -webkit-text-stroke: 0; }
.clear { background: #ffd1fc; color: #33bf8c; }
.equals { grid-row: span 2; margin: 2px 0; background: #ffd1fc; color: #ad8a00; -webkit-text-stroke: .7px; }

.side {
  grid-column: 2;
  grid-row: 3 / 5;
  display: flex;
  flex-direction: column;
  padding: 5px 1px 0 0;
  border-left: 2px solid #bdbdbd;
}
.side div { display: grid; place-items: center; height: 79.8px; }
.side div:nth-child(9) { height: 96px; }
.side .side-bottom { margin: auto 24px 0 26px; height: 90px; border-top: 2px solid #bdbdbd; }
.side div:last-child { height: 75px; margin-bottom: 6px; }

.taskbar {
  grid-column: 1 / 3;
  display: grid;
  grid-template-columns: 962px 75px 446px 1097px 1fr;
  align-items: center;
  padding-left: 27px;
  border-top: 2px solid #47484a;
  background: linear-gradient(90deg, #14243e 0, #15273b 500px, #1d252e 1100px, #2e2318 1600px, #2e2318 1900px, #2a271c 2300px, #2e2519 2600px, #2b2519 3189px);
  color: #fff;
}
.weather { display: flex; gap: 13px; align-items: center; }
.weather svg { margin-top: -3px; }
.stack { display: flex; flex-direction: column; }
.weather .stack { margin-top: 0; }
.dim { color: #c5c8cd; }
.win-logo { margin-top: 3px; }
.search {
  display: grid;
  grid-template-columns: 51px 1fr 50px;
  align-items: center;
  width: 436px;
  height: 60px;
  margin-top: 1px;
  padding-left: 21px;
  border-radius: 30px;
  background: #f3f3f3;
  color: #5d5d5d;
  font-size: 26.5px;
}
.apps { display: flex; gap: 8px; }
.app { position: relative; display: grid; place-items: center; width: 80px; height: 80px; border-radius: 8px; }
.on { background: #3b3127; box-shadow: inset 0 0 0 2px #443a30; }
.app i { position: absolute; bottom: 2px; left: 34px; width: 12px; height: 6px; border-radius: 3px; background: #9d9993; }
.app.on i { left: 24px; width: 32px; background: #4cc2ff; }
.badge { position: absolute; }
.big { left: 42px; top: 6px; }
.small { left: 41px; top: 40px; }
.tray {
  display: grid;
  grid-template-columns: 59px 60px 92px 48px 48px 34px 154px 47px;
  align-items: center;
}
.lang { align-items: center; width: 63px; }
.clock { align-items: flex-end; justify-self: end; }
.count { justify-self: end; width: 32px; height: 32px; border-radius: 50%; background: #4cc2ff; color: #111; font-size: 21px; line-height: 31px; text-align: center; }
```

FILE: labels.js
```js
document.querySelectorAll('[data-w]').forEach(function (el) {
  el.style.width = 'max-content';
  var gap = Number(el.dataset.w) + 1 - el.getBoundingClientRect().width;
  el.style.letterSpacing = gap / el.textContent.length + 'px';
});
```
